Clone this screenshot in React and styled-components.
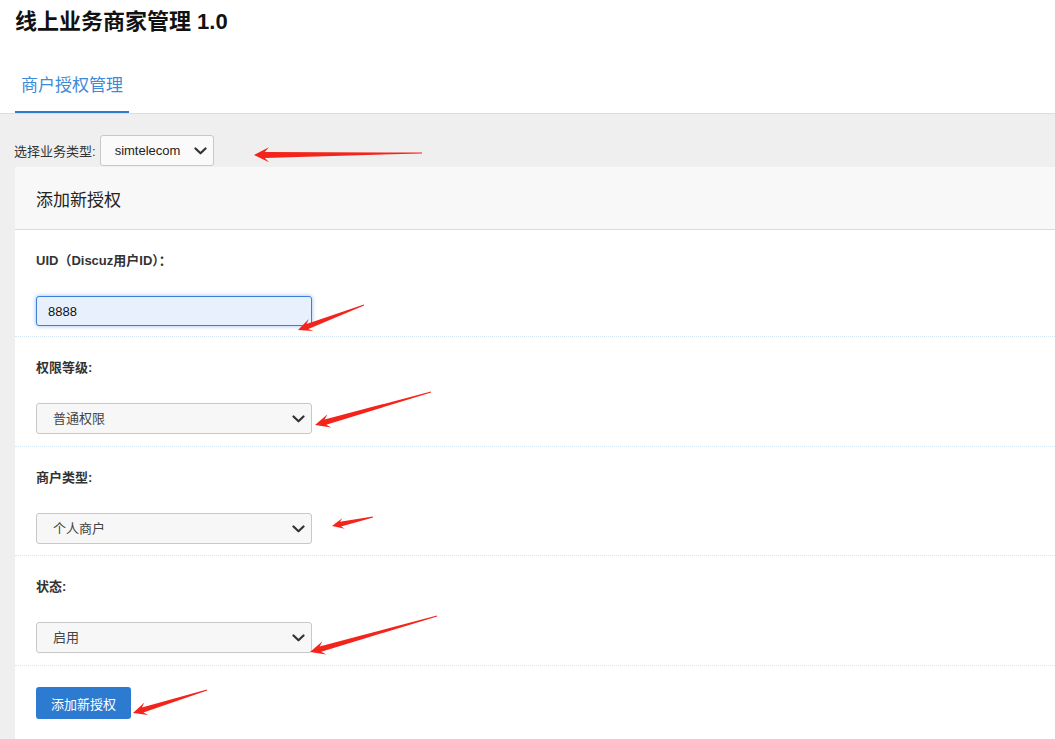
import React, { useEffect, useRef } from 'react';
import styled, { createGlobalStyle } from 'styled-components';

const GlobalStyle = createGlobalStyle`
  html, body {
    margin: 0;
    padding: 0;
    background: #efefef;
    font-family: "Liberation Sans", "Noto Sans CJK SC", sans-serif;
    color: #333;
  }
  * { box-sizing: border-box; }
`;

const Page = styled.div`
  position: relative;
  min-height: 739px;
  overflow: hidden;
`;

const Header = styled.header`
  background: #fff;
  border-bottom: 1px solid #dcdcdc;
`;

const Title = styled.h1`
  margin: 0;
  padding: 9px 15px 0;
  font-size: 22px;
  line-height: 26px;
  font-weight: bold;
  color: #111;
`;

const Tabs = styled.nav`
  display: flex;
  padding-left: 15px;
  margin-top: 21px;
`;

const Tab = styled.a`
  display: flex;
  align-items: center;
  height: 57px;
  padding: 0 6px;
  font-size: 17px;
  color: ${p => (p.$active ? '#3d8ad8' : '#555')};
  border-bottom: 2px solid ${p => (p.$active ? '#2f7bd0' : 'transparent')};
  text-decoration: none;
  cursor: pointer;
`;

const Toolbar = styled.div`
  display: flex;
  align-items: center;
  gap: 4px;
  padding: 21px 14px 0;
  font-size: 13px;
  color: #333;
`;

const SelectWrap = styled.div`
  position: relative;
  width: ${p => p.$w}px;
  height: ${p => p.$h}px;
`;

const NativeSelect = styled.select`
  appearance: none;
  width: 100%;
  height: 100%;
  padding: 0 30px 0 ${p => p.$pl}px;
  font-family: inherit;
  font-size: 13px;
  color: ${p => p.$color};
  background: ${p => p.$bg};
  border: 1px solid #c8c8c8;
  border-radius: 3px;
  outline: none;
`;

const Chevron = styled.svg`
  position: absolute;
  right: 7px;
  top: 50%;
  transform: translateY(-50%);
  pointer-events: none;
`;

const Card = styled.section`
  margin-left: 15px;
  background: #fff;
  margin-top: 1px;
`;

const CardHeader = styled.div`
  display: flex;
  align-items: center;
  height: 63px;
  padding-left: 21px;
  background: #f8f8f8;
  border-bottom: 1px solid #dcdcdc;
  font-size: 17px;
  color: #222;
`;

const Row = styled.div`
  padding: 21px 21px ${p => p.$pb}px;
  border-bottom: 1px dotted #d6e6f4;
`;

const Label = styled.label`
  display: block;
  font-size: 13px;
  line-height: 20px;
  font-weight: bold;
  color: #333;
  margin-bottom: 25px;
`;

const TextInput = styled.input`
  display: block;
  width: 276px;
  height: 30px;
  padding: 0 11px;
  font-family: inherit;
  font-size: 13px;
  color: #111;
  background: #e8f0fe;
  border: 1px solid #3b7fd6;
  border-radius: 3px;
  box-shadow: 0 0 4px rgba(59, 127, 214, 0.55);
  outline: none;
  caret-color: #000;
`;

const ButtonRow = styled.div`
  padding: 21px 21px 30px;
`;

const Button = styled.button`
  width: 95px;
  height: 32px;
  font-family: inherit;
  font-size: 13px;
  color: #fff;
  background: #2d7bd0;
  border: none;
  border-radius: 3px;
  cursor: pointer;
`;

const Overlay = styled.svg`
  position: absolute;
  left: 0;
  top: 0;
  pointer-events: none;
`;

function Select({ value, options, w = 276, h = 31, pl = 16, bg = '#f7f7f7', color = '#444' }) {
  return (
    <SelectWrap $w={w} $h={h}>
      <NativeSelect defaultValue={value} $pl={pl} $bg={bg} $color={color}>
        {options.map(o => (
          <option key={o}>{o}</option>
        ))}
      </NativeSelect>
      <Chevron width="13" height="8" viewBox="0 0 13 8">
        <path d="M1.5 1.5 L6.5 6.3 L11.5 1.5" fill="none" stroke="#333" strokeWidth="2.2" strokeLinecap="round" strokeLinejoin="round" />
      </Chevron>
    </SelectWrap>
  );
}

// annotation arrows: tip and tail in page coords
const arrows = [
  { tip: [254, 155], tail: [422, 153], head: 15, barb: 7.5, shaft: 3 },
  { tip: [298, 330], tail: [364, 305], head: 14, barb: 6.5, shaft: 2.6 },
  { tip: [315, 425], tail: [431, 392], head: 15, barb: 7, shaft: 2.8 },
  { tip: [332, 526], tail: [373, 517], head: 12, barb: 5.5, shaft: 2.4 },
  { tip: [310, 652], tail: [437, 616], head: 15, barb: 7, shaft: 2.8 },
  { tip: [133, 713], tail: [207, 690], head: 14, barb: 6.5, shaft: 2.6 },
];

function arrowPoints({ tip, tail, head, barb, shaft }) {
  const [tx, ty] = tip;
  const dx = tail[0] - tx;
  const dy = tail[1] - ty;
  const len = Math.hypot(dx, dy);
  const ux = dx / len, uy = dy / len;
  const nx = -uy, ny = ux;
  const p = (a, b) => `${(tx + ux * a + nx * b).toFixed(1)},${(ty + uy * a + ny * b).toFixed(1)}`;
  const notch = head * 0.72;
  return [
    p(0, 0),
    p(head, barb),
    p(notch, shaft),
    p(len, 0.4),
    p(len, -0.4),
    p(notch, -shaft),
    p(head, -barb),
  ].join(' ');
}

export default function App() {
  const uidRef = useRef(null);

  useEffect(() => {
    const el = uidRef.current;
    if (el) {
      el.focus();
      el.setSelectionRange(4, 4);
    }
  }, []);

  return (
    <Page>
      <GlobalStyle />
      <Header>
        <Title>线上业务商家管理 1.0</Title>
        <Tabs>
          <Tab $active>商户授权管理</Tab>
        </Tabs>
      </Header>

      <Toolbar>
        <span>选择业务类型:</span>
        <Select value="simtelecom" options={['simtelecom']} w={114} h={31} pl={14} bg="#fafafa" color="#222" />
      </Toolbar>

      <Card>
        <CardHeader>添加新授权</CardHeader>
        <Row $pb={10}>
          <Label>UID（Discuz用户ID）：</Label>
          <TextInput ref={uidRef} defaultValue="8888" />
        </Row>
        <Row $pb={12}>
          <Label>权限等级:</Label>
          <Select value="普通权限" options={['普通权限', '高级权限']} />
        </Row>
        <Row $pb={11}>
          <Label>商户类型:</Label>
          <Select value="个人商户" options={['个人商户', '企业商户']} />
        </Row>
        <Row $pb={12}>
          <Label>状态:</Label>
          <Select value="启用" options={['启用', '禁用']} />
        </Row>
        <ButtonRow>
          <Button>添加新授权</Button>
        </ButtonRow>
      </Card>

      <Overlay width="1055" height="739" viewBox="0 0 1055 739">
        {arrows.map((a, i) => (
          <polygon key={i} points={arrowPoints(a)} fill="#f3241b" />
        ))}
      </Overlay>
    </Page>
  );
}
